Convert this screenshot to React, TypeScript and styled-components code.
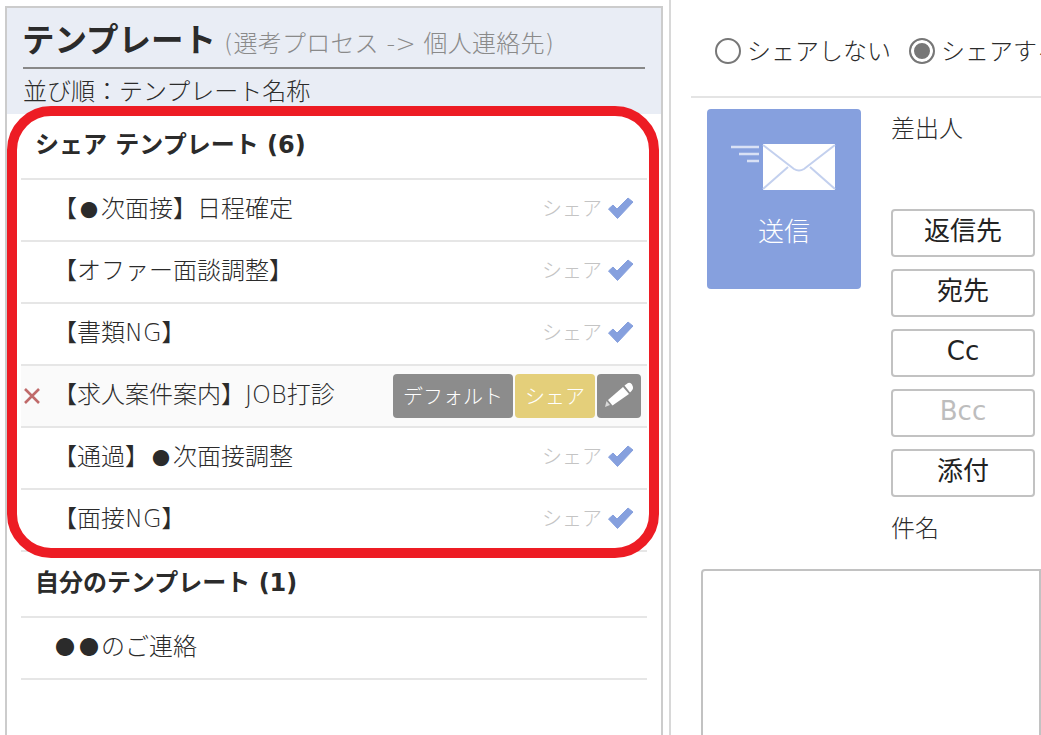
import type { ReactNode } from 'react';
import styled, { createGlobalStyle } from 'styled-components';

const LATIN_STACK = '"DejaVu Sans", "Noto Sans CJK JP", sans-serif';

const GlobalStyle = createGlobalStyle`
  html, body {
    margin: 0;
    padding: 0;
    background: #fff;
  }
  body {
    font-family: "Noto Sans CJK JP", "Noto Sans", sans-serif;
    color: #2b2b2b;
    font-weight: 300;
  }
`;

const Page = styled.div`
  display: flex;
  width: 1041px;
  height: 735px;
  overflow: hidden;
  padding: 6px 0 0 5px;
  box-sizing: border-box;
`;

const Sidebar = styled.aside`
  position: relative;
  flex: none;
  width: 658px;
  height: 760px;
  box-sizing: border-box;
  border: 2px solid #ccc;
`;

const SidebarHead = styled.header`
  height: 106px;
  padding: 0 16px;
  background: #e9edf5;
`;

const TitleLine = styled.div`
  display: flex;
  align-items: baseline;
  gap: 8px;
  height: 61px;
  line-height: 60px;
  box-sizing: border-box;
  border-bottom: 2px solid #888;
  white-space: nowrap;
`;

const Title = styled.h1`
  margin: 0 0 0 -1px;
  font-size: 32.5px;
  font-weight: 700;
  color: #2b2b2b;
`;

const Subtitle = styled.span`
  font-family: ${LATIN_STACK};
  font-size: 24px;
  letter-spacing: 0.2px;
  color: #8a8a8a;
`;

const SortLine = styled.div`
  font-size: 24px;
  line-height: 41px;
`;

const Section = styled.section`
  padding: 0 14px;
`;

const SectionHead = styled.h2`
  margin: 0;
  height: 66px;
  box-sizing: border-box;
  padding-left: 14px;
  font-family: ${LATIN_STACK};
  font-size: 24px;
  font-weight: 700;
  line-height: 62px;
  border-bottom: 2px solid #e6e6e6;
`;

const Row = styled.div<{ $hover?: boolean }>`
  display: flex;
  align-items: center;
  height: 62px;
  box-sizing: border-box;
  border-bottom: 2px solid #e6e6e6;
  background: ${({ $hover }) => ($hover ? '#fafafa' : 'transparent')};
`;

const MarkSlot = styled.span`
  flex: none;
  display: flex;
  align-items: center;
  width: 32px;
  padding-left: 2px;
  box-sizing: border-box;
`;

const RowName = styled.span`
  flex: 1;
  font-family: ${LATIN_STACK};
  font-size: 24px;
  line-height: 34px;
  margin-top: -3px;
  white-space: nowrap;
`;

const Bullet = styled.span<{ $size: number }>`
  display: inline-block;
  width: 24px;
  text-align: center;
  font-size: ${({ $size }) => $size}px;
  line-height: 24px;
`;

const SharedTag = styled.span`
  display: flex;
  align-items: center;
  gap: 4px;
  padding-right: 13px;
  margin-top: -5px;
  font-size: 20px;
  color: #c4c4c4;
`;

const RowActions = styled.div`
  display: flex;
  gap: 2px;
  padding-right: 6px;
`;

const ActionButton = styled.button<{ $bg: string; $width: number }>`
  width: ${({ $width }) => $width}px;
  height: 44px;
  padding: 0 0 2px;
  border: 0;
  border-radius: 4px;
  background: ${({ $bg }) => $bg};
  color: #fff;
  font: inherit;
  font-size: 20px;
  display: flex;
  align-items: center;
  justify-content: center;
`;

const Highlight = styled.div`
  position: absolute;
  left: 0;
  top: 98px;
  width: 652px;
  height: 452px;
  box-sizing: border-box;
  border: 10px solid #ed1c24;
  border-radius: 44px;
  pointer-events: none;
`;

const Main = styled.main`
  flex: none;
  width: 372px;
  height: 760px;
  margin-left: 6px;
  border-left: 2px solid #d8d8d8;
  margin-top: -6px;
  padding-left: 20px;
  box-sizing: border-box;
  overflow: hidden;
`;

const ShareBar = styled.div`
  display: flex;
  align-items: center;
  gap: 18px;
  height: 96px;
  width: 400px;
  padding: 16px 0 0 24px;
  box-sizing: border-box;
  white-space: nowrap;
  font-size: 24px;
`;

const RadioLabel = styled.label`
  display: flex;
  align-items: center;
  gap: 6px;
  height: 34px;
  margin-top: -14px;
`;

const Radio = styled.span<{ $on?: boolean }>`
  flex: none;
  width: 26px;
  height: 26px;
  margin-top: 4px;
  box-sizing: border-box;
  border-radius: 50%;
  border: 2px solid #777;
  background: ${({ $on }) => ($on ? '#777' : '#fff')};
  box-shadow: ${({ $on }) => ($on ? 'inset 0 0 0 3px #fff' : 'none')};
`;

const Divider = styled.div`
  height: 2px;
  background: #e4e4e4;
`;

const ComposeArea = styled.div`
  display: flex;
  align-items: flex-start;
  padding: 11px 0 0 16px;
  gap: 30px;
`;

const SendButton = styled.button`
  flex: none;
  width: 154px;
  height: 180px;
  padding: 34px 0 0;
  border: 0;
  border-radius: 4px;
  background: #86a0de;
  color: #fff;
  font: inherit;
  font-size: 26px;
  display: flex;
  flex-direction: column;
  align-items: center;
  gap: 20px;
`;

const Fields = styled.div`
  display: flex;
  flex-direction: column;
  align-items: flex-start;
  font-size: 24px;
`;

const FieldLabel = styled.div<{ $bottom: number }>`
  line-height: 40px;
  margin-top: -2px;
  margin-bottom: ${({ $bottom }) => $bottom}px;
`;

const FieldButton = styled.button<{ $muted?: boolean }>`
  width: 144px;
  height: 48px;
  margin-bottom: 12px;
  padding: 0 0 5px;
  box-sizing: border-box;
  border: 2px solid #c2c2c2;
  border-radius: 4px;
  background: #fff;
  color: ${({ $muted }) => ($muted ? '#bdbdbd' : '#222')};
  font-family: ${LATIN_STACK};
  font-weight: 400;
  font-size: 26px;
  line-height: 36px;
`;

const Body = styled.div`
  height: 300px;
  margin: 0 0 0 10px;
  border: 2px solid #c2c2c2;
  border-radius: 4px 0 0 0;
`;

const SoftSvg = styled.svg`
  filter: blur(0.4px);
`;

function CheckIcon() {
  return (
    <SoftSvg width="28" height="24" viewBox="0 0 28 24">
      <path
        d="M2.5 13 L7 9 L11 13 L22 2 L27 6 L11.5 22.5 Z"
        fill="#86a0de"
        stroke="#86a0de"
        strokeWidth="1"
        strokeLinejoin="round"
      />
    </SoftSvg>
  );
}

function CrossIcon() {
  return (
    <svg width="18" height="18" viewBox="0 0 18 18">
      <path d="M2 2 L16 16 M16 2 L2 16" stroke="#c06a6a" strokeWidth="2.6" />
    </svg>
  );
}

function PencilIcon() {
  return (
    <SoftSvg width="30" height="26" viewBox="0 0 30 26">
      <path d="M1 25 L2.5 19 L6 23 Z" fill="#d8d8d8" />
      <path d="M4 18 L19 5 L25 12 L8.5 23.5 Z" fill="#fff" />
      <path d="M20.5 3.5 L24 1 Q26.5 0 28 2.5 L29 5 Q29.5 7.5 27.5 9 L26 10.5 Z" fill="#fff" />
    </SoftSvg>
  );
}

function MailIcon() {
  return (
    <svg width="106" height="48" viewBox="0 0 106 48">
      <path d="M0 4 H28 M8 11 H28 M16 18 H28" stroke="#d9e1f5" strokeWidth="2.4" />
      <rect x="32" y="1" width="72" height="46" fill="#fff" />
      <path
        d="M32 2 L63 26 Q68 29 73 26 L104 2 M32 46 L57 24 M104 46 L79 24"
        fill="none"
        stroke="#c3d0ee"
        strokeWidth="2"
      />
    </svg>
  );
}

function SharedRow({ children }: { children: ReactNode }) {
  return (
    <Row>
      <MarkSlot />
      <RowName>{children}</RowName>
      <SharedTag>
        シェア
        <CheckIcon />
      </SharedTag>
    </Row>
  );
}

export default function App() {
  return (
    <>
      <GlobalStyle />
      <Page>
        <Sidebar>
          <SidebarHead>
            <TitleLine>
              <Title>テンプレート</Title>
              <Subtitle>(選考プロセス -&gt; 個人連絡先)</Subtitle>
            </TitleLine>
            <SortLine>並び順：テンプレート名称</SortLine>
          </SidebarHead>
          <Section>
            <SectionHead>シェア テンプレート (6)</SectionHead>
            <SharedRow>
              【<Bullet $size={18}>●</Bullet>次面接】日程確定
            </SharedRow>
            <SharedRow>【オファー面談調整】</SharedRow>
            <SharedRow>【書類NG】</SharedRow>
            <Row $hover>
              <MarkSlot>
                <CrossIcon />
              </MarkSlot>
              <RowName>【求人案件案内】JOB打診</RowName>
              <RowActions>
                <ActionButton $bg="#8c8c8c" $width={120}>
                  デフォルト
                </ActionButton>
                <ActionButton $bg="#e4cf7a" $width={80}>
                  シェア
                </ActionButton>
                <ActionButton $bg="#8c8c8c" $width={44}>
                  <PencilIcon />
                </ActionButton>
              </RowActions>
            </Row>
            <SharedRow>
              【通過】<Bullet $size={18}>●</Bullet>次面接調整
            </SharedRow>
            <SharedRow>【面接NG】</SharedRow>
            <SectionHead>自分のテンプレート (1)</SectionHead>
            <Row>
              <MarkSlot />
              <RowName>
                <Bullet $size={20}>●</Bullet>
                <Bullet $size={20}>●</Bullet>のご連絡
              </RowName>
            </Row>
          </Section>
          <Highlight />
        </Sidebar>
        <Main>
          <ShareBar>
            <RadioLabel>
              <Radio />
              シェアしない
            </RadioLabel>
            <RadioLabel>
              <Radio $on />
              シェアする
            </RadioLabel>
          </ShareBar>
          <Divider />
          <ComposeArea>
            <SendButton>
              <MailIcon />
              送信
            </SendButton>
            <Fields>
              <FieldLabel $bottom={62}>差出人</FieldLabel>
              <FieldButton>返信先</FieldButton>
              <FieldButton>宛先</FieldButton>
              <FieldButton>Cc</FieldButton>
              <FieldButton $muted>Bcc</FieldButton>
              <FieldButton>添付</FieldButton>
              <FieldLabel $bottom={22}>件名</FieldLabel>
            </Fields>
          </ComposeArea>
          <Body />
        </Main>
      </Page>
    </>
  );
}
